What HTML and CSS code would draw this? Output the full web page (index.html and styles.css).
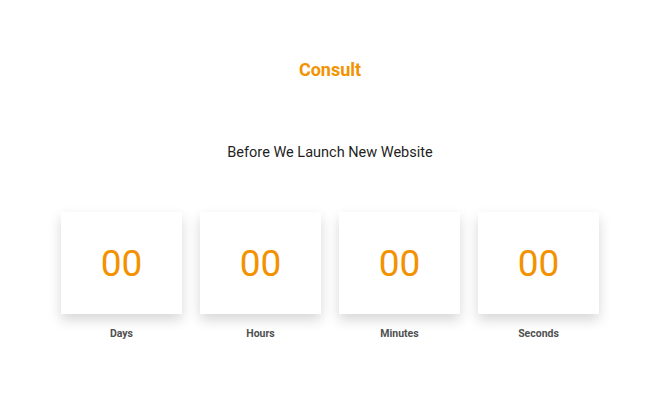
FILE: index.html
```html
<!DOCTYPE html>
<html lang="en">

<head>
    <meta charset="UTF-8" />
    <meta name="viewport" content="width=device-width, initial-scale=1.0" />
    <title>Consult - Coming Soon</title>
    <link rel="stylesheet" href="styles.css">
</head>

<body>
    <div class="pagina">
        <h1 class="logo">Consult</h1>
        <h2 class="subtitulo">Before We Launch New Website</h2>
        <div class="contador">
            <div class="bloque">
                <div class="caja"><span id="dias">00</span></div>
                <p>Days</p>
            </div>
            <div class="bloque">
                <div class="caja"><span id="horas">00</span></div>
                <p>Hours</p>
            </div>
            <div class="bloque">
                <div class="caja"><span id="minutos">00</span></div>
                <p>Minutes</p>
            </div>
            <div class="bloque">
                <div class="caja"><span id="segundos">00</span></div>
                <p>Seconds</p>
            </div>
        </div>
    </div>
</body>

</html>
```

FILE: styles.css
```css
* {
    box-sizing: border-box;
    margin: 0;
    padding: 0;
}

body {
    font-family: Roboto, "Liberation Sans", sans-serif;
    background-color: #fff;
}

.pagina {
    display: flex;
    flex-direction: column;
    align-items: center;
    padding-top: 58px;
}

.logo {
    font-size: 18px;
    font-weight: 700;
    color: #f39200;
    line-height: 24px;
}

.subtitulo {
    margin-top: 61px;
    font-size: 14.5px;
    font-weight: 400;
    color: #1f1f24;
    line-height: 20px;
}

.contador {
    display: flex;
    gap: 18px;
    margin-top: 49px;
}

.bloque {
    width: 121px;
    text-align: center;
}

.caja {
    height: 102px;
    background-color: #fff;
    box-shadow: 0 6px 12px rgba(0, 0, 0, 0.16);
    display: flex;
    align-items: center;
    justify-content: center;
    font-size: 37px;
    color: #f39200;
}

.bloque p {
    margin-top: 13px;
    font-size: 10.5px;
    font-weight: 700;
    color: #505050;
}
```
